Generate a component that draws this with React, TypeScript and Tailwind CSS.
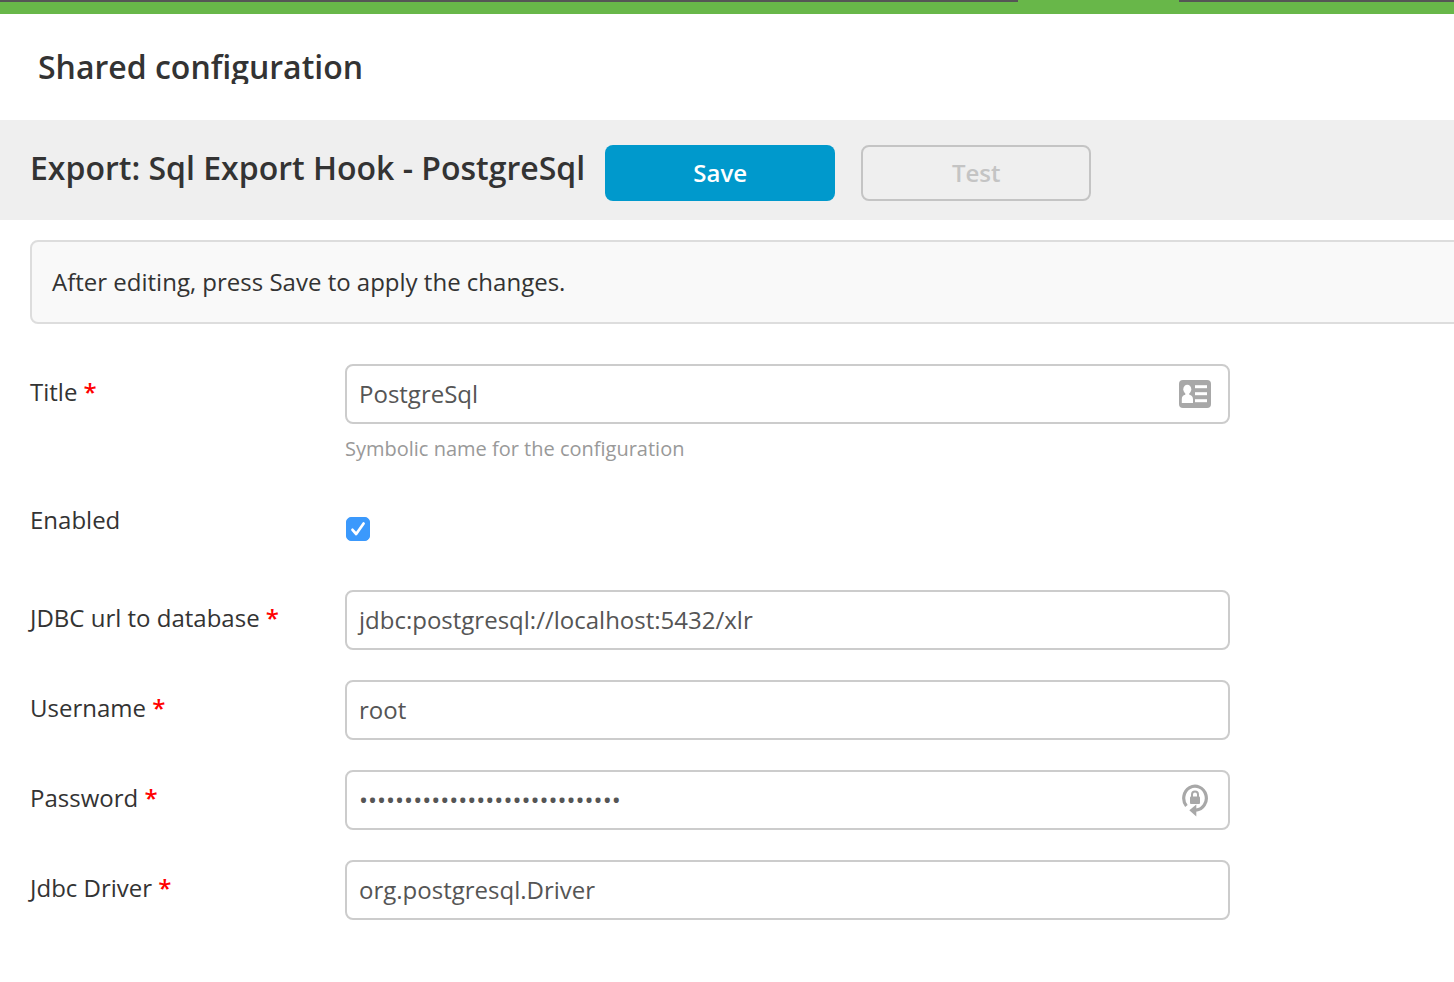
import { useId, useState } from "react";
import type { ReactNode } from "react";

function ContactCardIcon() {
  return (
    <svg viewBox="0 0 32 28" className="h-7 w-8" aria-hidden="true">
      <rect width="32" height="28" rx="4" fill="#a8a8a8" />
      <g fill="#fff">
        <ellipse cx="8.3" cy="9.300" rx="4" ry="4.500" />
        <path d="M6.300 12h4v2.800c2.400.7 3.700 1.800 3.700 4.400V23H2.800v-3.800c0-2.600 1.100-3.700 3.500-4.400z" />
        <rect x="16" y="5.200" width="12" height="3" />
        <rect x="16" y="12.200" width="12" height="3" />
        <rect x="16" y="19.200" width="12" height="3" />
      </g>
    </svg>
  );
}

function PasswordIcon() {
  return (
    <svg viewBox="0 0 28 34" className="h-[34px] w-7" aria-hidden="true">
      <path d="M5.400 23A11.300 12 0 1 1 15 27.200" fill="none" stroke="#a8a8a8" strokeWidth="3.200" />
      <path d="M8.300 27.200L15.300 21.500V33.500z" fill="#a8a8a8" />
      <rect x="9" y="13.500" width="10" height="7.500" rx="1" fill="#a8a8a8" />
      <path d="M11 14v-2.500a3 3 0 0 1 6 0V14" fill="none" stroke="#a8a8a8" strokeWidth="2" />
    </svg>
  );
}

function Row({ id, label, required, children }: { id: string; label: string; required?: boolean; children: ReactNode }) {
  return (
    <div className="flex items-start">
      <label htmlFor={id} className="w-[315px] shrink-0 pt-3 leading-8">
        {label}
        {required && (
          <>
            {" "}
            <span className="font-semibold text-[#ff0000]">*</span>
          </>
        )}
      </label>
      <div className="max-w-[885px] min-w-0 flex-1">{children}</div>
    </div>
  );
}

type FieldProps = { label: string; initial: string; type?: string; hint?: string; icon?: ReactNode };

function Field({ label, initial, type = "text", hint, icon }: FieldProps) {
  const id = useId();
  const [value, setValue] = useState(initial);
  return (
    <Row id={id} label={label} required>
      <div className="relative">
        <input
          id={id}
          type={type}
          value={value}
          onChange={(e) => setValue(e.target.value)}
          className="block h-[60px] w-full rounded-lg border-2 border-[#cccccc] bg-white px-2.5 pb-0.5 indent-0.5 text-[#555555] outline-none focus:border-[#0099cc]"
        />
        {icon && <span className="pointer-events-none absolute inset-y-0 right-0 flex w-[70px] items-center justify-center">{icon}</span>}
      </div>
      {hint && <p className="pt-3 text-xl leading-[26px] text-[#999999]">{hint}</p>}
    </Row>
  );
}

function EnabledRow() {
  const id = useId();
  const [checked, setChecked] = useState(true);
  return (
    <Row id={id} label="Enabled">
      <div className="relative mt-[25px] mb-[19px] ml-px h-6 w-6">
        <input
          id={id}
          type="checkbox"
          checked={checked}
          onChange={(e) => setChecked(e.target.checked)}
          className="block h-6 w-6 appearance-none rounded-[5px] border border-[#999999] bg-white checked:border-[#3b99fc] checked:bg-[#3b99fc]"
        />
        {checked && (
          <svg viewBox="0 0 24 24" className="pointer-events-none absolute inset-0 h-6 w-6" aria-hidden="true">
            <path d="M6.500 12.800l3.700 4.200L17.600 6.500" fill="none" stroke="#fff" strokeWidth="2.700" strokeLinecap="round" strokeLinejoin="round" />
          </svg>
        )}
      </div>
    </Row>
  );
}

export default function App() {
  return (
    <div className="min-h-screen overflow-x-hidden bg-white font-['Open_Sans',sans-serif] text-2xl text-[#333333]">
      <div className="flex h-[14px] bg-[#68b749]">
        <div className="h-[2px] w-[70%] bg-[#555555]" />
        <div className="w-[161px]" />
        <div className="h-[2px] flex-1 bg-[#555555]" />
      </div>
      <header className="h-[106px] px-[38px] pt-[37px]">
        <h1 className="h-[33px] overflow-hidden text-[32px] leading-8 font-semibold">Shared configuration</h1>
      </header>
      <div className="flex items-start bg-[#efefef] px-[30px] pt-[25px] pb-[19px]">
        <h2 className="mr-5 text-[32px] leading-[46px] font-semibold">Export: Sql Export Hook - PostgreSql</h2>
        <button type="button" className="mr-[26px] h-14 w-[230px] rounded-lg bg-[#0099cc] font-semibold text-white">
          Save
        </button>
        <button type="button" disabled className="h-14 w-[230px] rounded-lg border-2 border-[#c4c4c4] font-semibold text-[#c4c4c4]">
          Test
        </button>
      </div>
      <main className="pt-5 pl-[30px]">
        <p className="-mr-2 rounded-lg border-2 border-[#dddddd] bg-[#f9f9f9] px-5 py-6 leading-8">
          After editing, press Save to apply the changes.
        </p>
        <form className="flex flex-col gap-[30px] pt-10 pr-[30px] pb-10" onSubmit={(e) => e.preventDefault()}>
          <Field label="Title" initial="PostgreSql" hint="Symbolic name for the configuration" icon={<ContactCardIcon />} />
          <EnabledRow />
          <Field label="JDBC url to database" initial="jdbc:postgresql://localhost:5432/xlr" />
          <Field label="Username" initial="root" />
          <Field label="Password" type="password" initial="abcdefghijklmnopqrstuvwxyz123" icon={<PasswordIcon />} />
          <Field label="Jdbc Driver" initial="org.postgresql.Driver" />
        </form>
      </main>
    </div>
  );
}
